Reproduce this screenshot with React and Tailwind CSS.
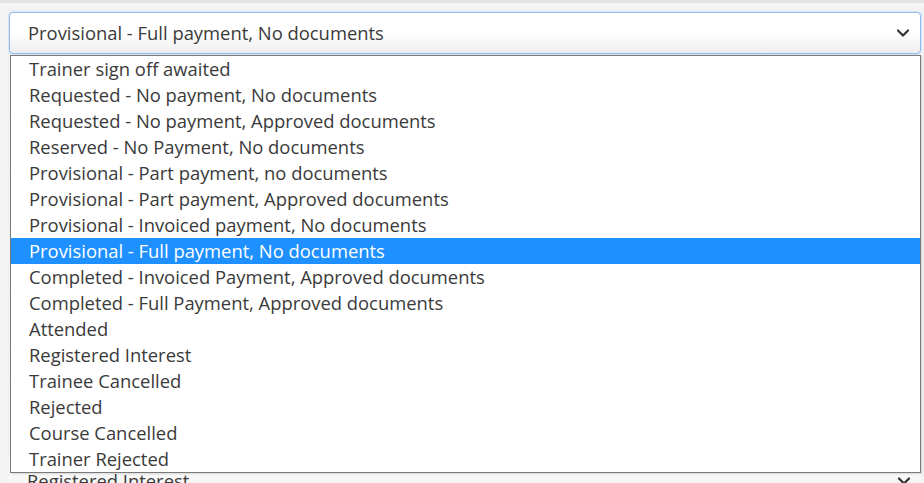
import React from 'react';

const options = [
  'Trainer sign off awaited',
  'Requested - No payment, No documents',
  'Requested - No payment, Approved documents',
  'Reserved - No Payment, No documents',
  'Provisional - Part payment, no documents',
  'Provisional - Part payment, Approved documents',
  'Provisional - Invoiced payment, No documents',
  'Provisional - Full payment, No documents',
  'Completed - Invoiced Payment, Approved documents',
  'Completed - Full Payment, Approved documents',
  'Attended',
  'Registered Interest',
  'Trainee Cancelled',
  'Rejected',
  'Course Cancelled',
  'Trainer Rejected'
];

const selected = 'Provisional - Full payment, No documents';

const Chevron = () => (
  <svg width="14" height="10" viewBox="0 0 14 10" fill="none">
    <path d="M2 2.5l5 5 5-5" stroke="#333" strokeWidth="2.2" strokeLinecap="round" strokeLinejoin="round" />
  </svg>
);

const App = () => {
  return (
    <div className="relative w-full h-[483px] overflow-hidden bg-[#f3f3f3] font-['Open_Sans',sans-serif]">
      {/* page behind the open list */}
      <div className="h-[3px] bg-[#e4e4e4]" />
      <div className="pl-[9px] pr-[3px] pt-[9px]">
        <div className="flex h-[42px] items-center justify-between rounded-[4px] border border-[#8dbcf2] bg-gradient-to-b from-white via-white to-[#eeeeee] pl-[18px] pr-[10px] shadow-[0_0_2px_rgba(80,150,240,0.5)]">
          <span className="text-[18.4px] text-[#3a3a3a]">{selected}</span>
          <Chevron />
        </div>
        <div className="flex flex-col">
          <div className="h-[64px] border-b border-[#dedede]" />
          <div className="h-[53px] border-b border-[#dedede]" />
          <div className="h-[56px] border-b border-[#dedede]" />
          <div className="h-[65px] border-b border-[#dedede]" />
          <div className="h-[57px] border-b border-[#dedede]" />
          <div className="h-[35px] border-b border-[#dedede]" />
          <div className="h-[76px]" />
        </div>
        <div className="flex h-[42px] items-center justify-between rounded-[4px] bg-gradient-to-b from-white to-[#eeeeee] pl-[18px] pr-[10px]">
          <span className="text-[18.4px] text-[#3a3a3a]">Registered Interest</span>
          <Chevron />
        </div>
      </div>

      {/* open listbox */}
      <ul className="absolute left-[10px] top-[55px] w-[911px] border border-[#7a7a7a] bg-white shadow-[1px_1px_2px_rgba(0,0,0,0.15)]">
        {options.map((opt) => (
          <li
            key={opt}
            className={
              opt === selected
                ? 'flex h-[26px] items-center bg-[#1e90ff] pl-[18px] text-[18.4px] text-white'
                : 'flex h-[26px] items-center pl-[18px] text-[18.4px] text-[#3a3a3a]'
            }
          >
            {opt}
          </li>
        ))}
      </ul>
    </div>
  );
};

export default App;
